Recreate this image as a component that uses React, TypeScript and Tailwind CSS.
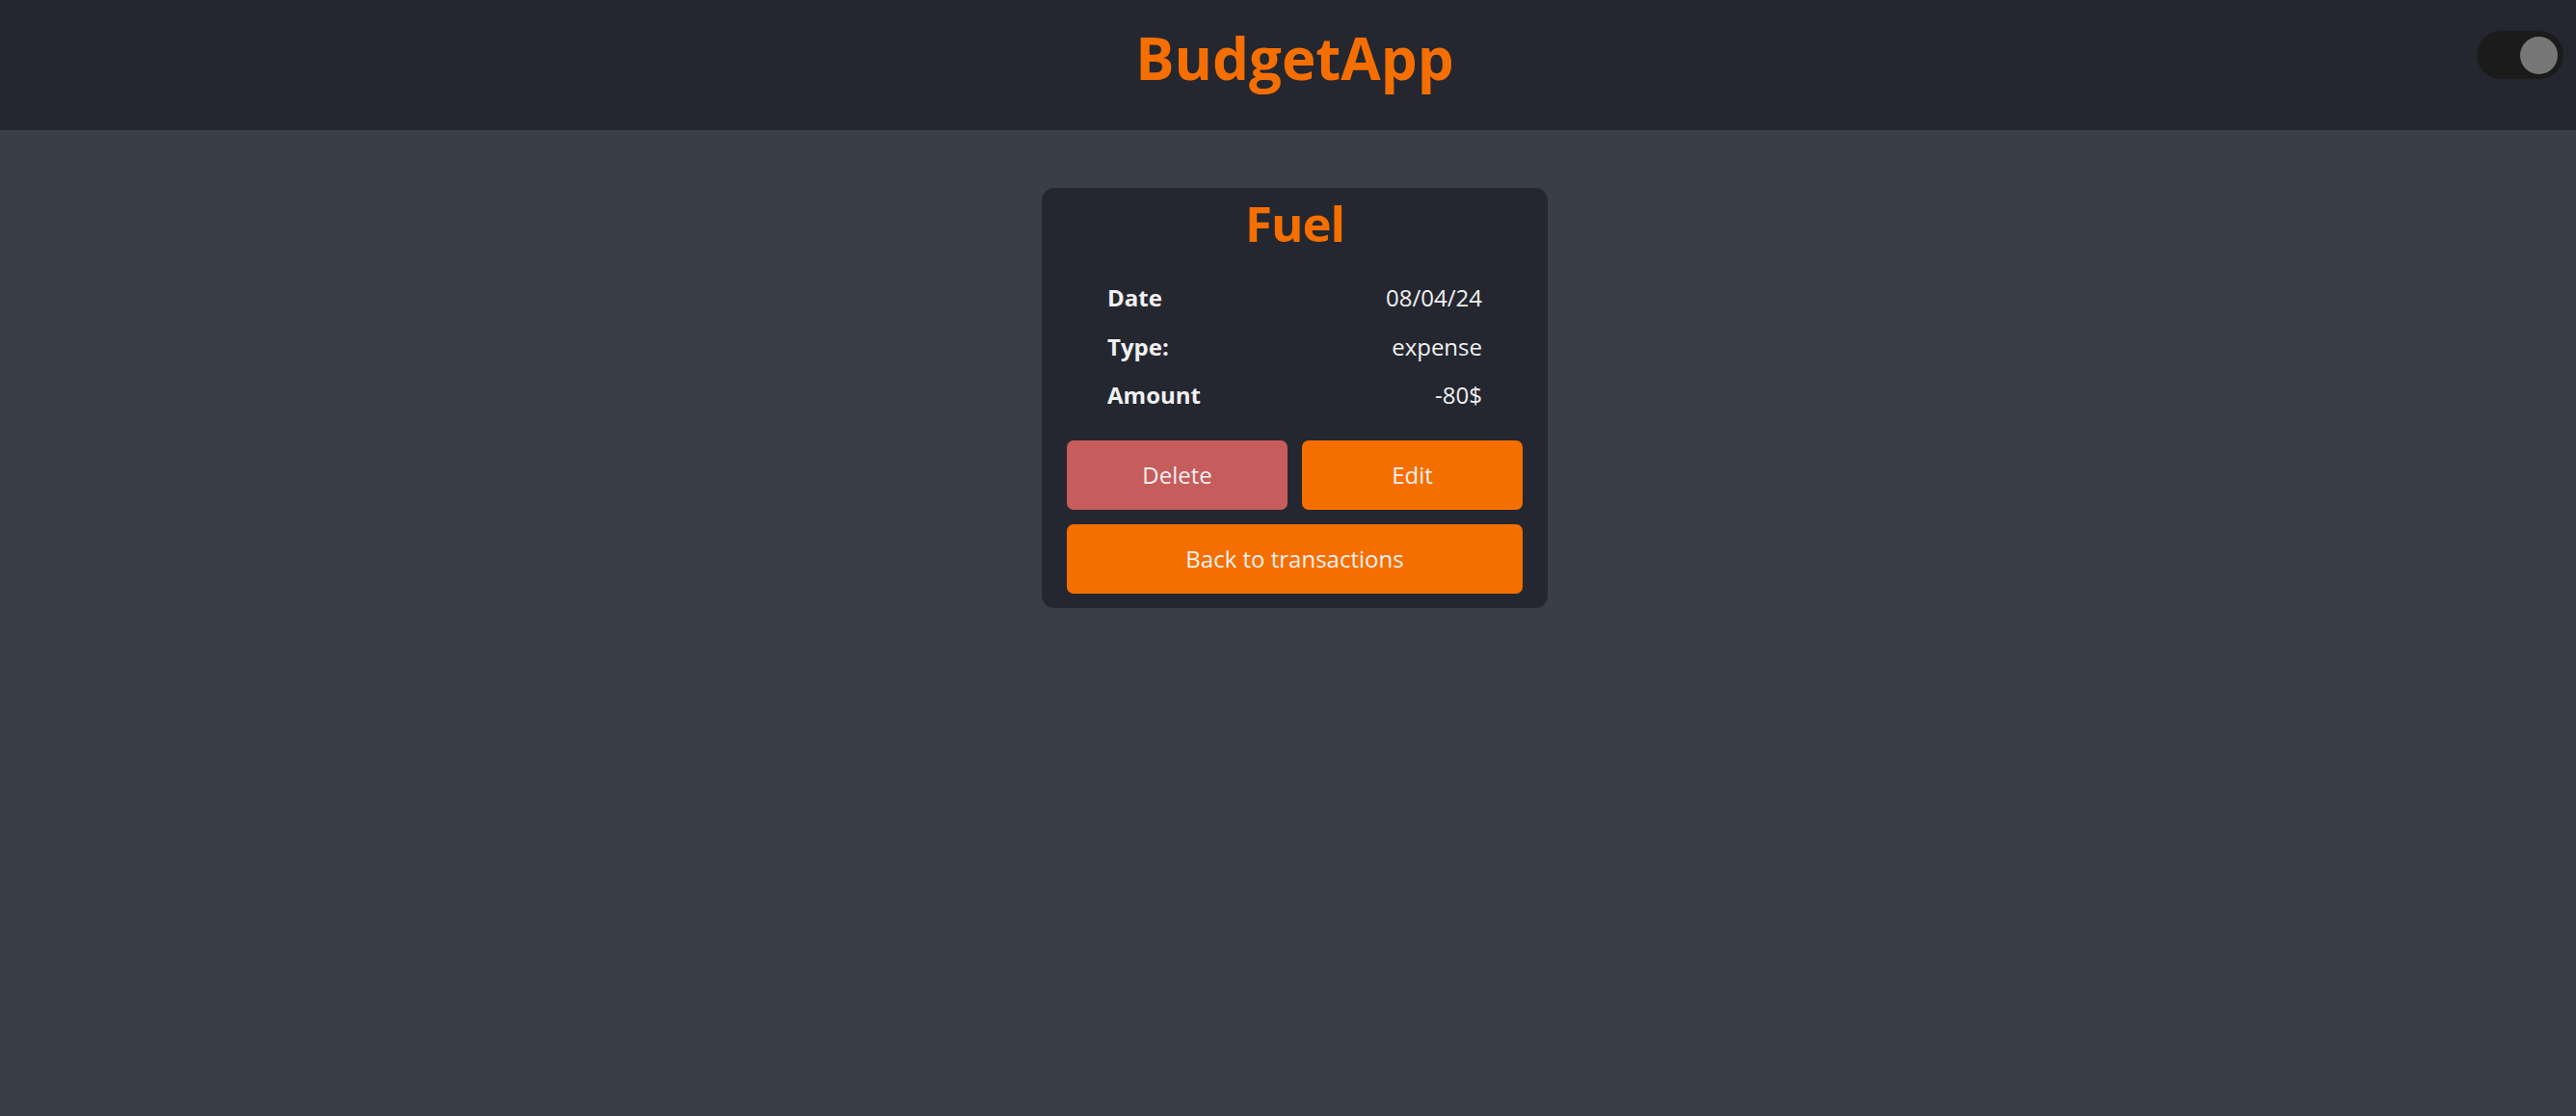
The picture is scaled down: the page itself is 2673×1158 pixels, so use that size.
import React from "react";

const rows = [
  { label: "Date", value: "08/04/24" },
  { label: "Type:", value: "expense" },
  { label: "Amount", value: "-80$" },
];

const ThemeToggle = () => (
  <button
    aria-label="Toggle theme"
    className="flex h-[50px] w-[90px] items-center justify-end rounded-full bg-[#1b1b1c] pr-[6px]"
  >
    <span className="block h-[39px] w-[39px] rounded-full bg-[#777777]" />
  </button>
);

const TransactionCard = () => {
  return (
    <div className="flex w-[525px] flex-col rounded-[13px] bg-[#242730] px-[26px] pb-[15px] pt-[11px]">
      <h2 className="text-center text-[51px] font-bold leading-[51px] tracking-[-1px] text-[#f56f00]">
        Fuel
      </h2>

      <div className="mt-[27px] flex flex-col px-[42px]">
        {rows.map((row) => (
          <div
            key={row.label}
            className="flex h-[50.5px] items-center justify-between text-[24px] text-[#f0f0f0]"
          >
            <span className="font-bold">{row.label}</span>
            <span>{row.value}</span>
          </div>
        ))}
      </div>

      <div className="mt-[21px] grid grid-cols-2 gap-x-[15px] gap-y-[15px]">
        <button className="h-[72px] rounded-[7px] bg-[#c75c5c] text-[24px] text-[#f0f0f0]">
          Delete
        </button>
        <button className="h-[72px] rounded-[7px] bg-[#f56f00] text-[24px] text-[#f0f0f0]">
          Edit
        </button>
        <button className="col-span-2 h-[72px] rounded-[7px] bg-[#f56f00] text-[24px] text-[#f0f0f0]">
          Back to transactions
        </button>
      </div>
    </div>
  );
};

export default function App() {
  return (
    <div
      className="min-h-[1158px] bg-[#3a3e48]"
      style={{ fontFamily: '"Segoe UI", "Open Sans", "Noto Sans", sans-serif' }}
    >
      {/* Top bar */}
      <header className="grid h-[135px] grid-cols-[1fr_auto_1fr] bg-[#242730] pl-[14px]">
        <div />
        <h1 className="pt-[30px] text-[60px] font-bold leading-[60px] text-[#f56f00]">
          BudgetApp
        </h1>
        <div className="flex justify-end pr-[13px] pt-[32px]">
          <div className="h-[50px]">
            <ThemeToggle />
          </div>
        </div>
      </header>

      <main className="flex justify-center pl-[14px] pt-[60px]">
        <TransactionCard />
      </main>
    </div>
  );
}
